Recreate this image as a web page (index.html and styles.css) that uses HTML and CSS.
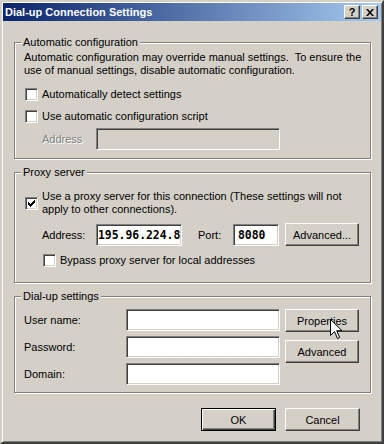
FILE: index.html
```html
<!DOCTYPE html>
<html lang="en">
<head>
  <meta charset="UTF-8">
  <title>Dial-up Connection Settings</title>
  <link rel="stylesheet" href="styles.css">
</head>
<body>
  <div class="window">
    <div class="titlebar">
      <span class="title">Dial-up Connection Settings</span>
      <span class="tb-btn tb-help">?</span>
      <span class="tb-btn tb-close">
        <svg width="8" height="7" viewBox="0 0 8 7"><path d="M0 0h2l2 2.5L6 0h2L5 3.5 8 7H6L4 4.5 2 7H0l3-3.5z" fill="#000"/></svg>
      </span>
    </div>

    <div class="content">
      <fieldset class="group">
        <legend>Automatic configuration</legend>
        <p class="note">Automatic configuration may override manual settings.&nbsp; To ensure the<br>use of manual settings, disable automatic configuration.</p>
        <div class="check-row"><span class="check"></span>Automatically detect settings</div>
        <div class="check-row"><span class="check"></span>Use automatic configuration script</div>
        <div class="field-row indent">
          <span class="lbl disabled">Address</span>
          <span class="edit wide disabled"></span>
        </div>
      </fieldset>

      <fieldset class="group proxy">
        <legend>Proxy server</legend>
        <div class="check-row multi">
          <span class="check checked">
            <svg width="7" height="7" viewBox="0 0 7 7"><path d="M0 2h1v1h1v1h1V3h1V2h1V1h1V0h1v3H6v1H5v1H4v1H3v1H2V6H1V5H0z" fill="#000"/></svg>
          </span>
          <span>Use a proxy server for this connection (These settings will not<br>apply to other connections).</span>
        </div>
        <div class="field-row indent">
          <span class="lbl">Address:</span>
          <span class="edit addr mono">195.96.224.8</span>
          <span class="lbl port">Port:</span>
          <span class="edit portnum mono">8080</span>
          <span class="btn adv">Advanced...</span>
        </div>
        <div class="check-row indent"><span class="check"></span>Bypass proxy server for local addresses</div>
      </fieldset>

      <fieldset class="group dialup">
        <legend>Dial-up settings</legend>
        <div class="dial-grid">
          <span class="lbl">User name:</span>
          <span class="edit"></span>
          <div class="side-buttons">
            <span class="btn">Properties
              <svg class="cursor" width="13" height="21" viewBox="0 0 13 21"><path d="M0.5 0.5v16l4-4 3 7 2.2-1-3-6.8h5.3z" fill="#fff" stroke="#000" stroke-width="1"/></svg>
            </span>
            <span class="btn">Advanced</span>
          </div>
          <span class="lbl">Password:</span>
          <span class="edit"></span>
          <span class="lbl">Domain:</span>
          <span class="edit"></span>
        </div>
      </fieldset>

      <div class="footer">
        <span class="btn default">OK</span>
        <span class="btn">Cancel</span>
      </div>
    </div>
  </div>
</body>
</html>
```

FILE: styles.css
```css
:root {
  --face: #d4d0c8;
  --shadow: #808080;
  --dark: #404040;
  --light: #ffffff;
}
body {
  margin: 0;
  background: var(--face);
  font-family: 'Liberation Sans', Arial, sans-serif;
  font-size: 11px;
  color: #000;
}
.window {
  width: 384px;
  height: 444px;
  box-sizing: border-box;
  border: 2px solid;
  border-color: var(--face) var(--dark) var(--dark) var(--face);
  box-shadow: inset 1px 1px 0 var(--light), inset -1px -1px 0 var(--shadow);
  padding: 1px;
  background: var(--face);
  white-space: nowrap;
}
.titlebar {
  height: 18px;
  display: flex;
  align-items: center;
  gap: 2px;
  padding: 0 3px 0 2px;
  background: linear-gradient(to right, #0a246a, #a6caf0);
}
.title {
  flex: 1;
  color: #fff;
  font-weight: bold;
  font-size: 11px;
}
.tb-btn {
  width: 16px;
  height: 14px;
  box-sizing: border-box;
  display: flex;
  align-items: center;
  justify-content: center;
  background: var(--face);
  border: 1px solid;
  border-color: var(--light) var(--dark) var(--dark) var(--light);
  box-shadow: inset -1px -1px 0 var(--shadow);
  font-weight: bold;
  font-size: 11px;
  line-height: 12px;
}
.content {
  padding: 15px 10px 0 11px;
}
.group {
  margin: 0 0 7px;
  padding: 1px 9px 8px;
  min-width: 0;
  border: 1px solid var(--shadow);
  box-shadow: 1px 1px 0 var(--light), inset 1px 1px 0 var(--light);
}
.group legend {
  margin-left: -3px;
  padding: 0 2px;
  line-height: 13px;
  background: var(--face);
}
.note {
  margin: 0 0 6px;
  padding-top: 1px;
  line-height: 13px;
}
.check-row {
  height: 22px;
  display: flex;
  align-items: center;
}
.check {
  width: 13px;
  height: 13px;
  box-sizing: border-box;
  margin: 0 4px 0 1px;
  flex-shrink: 0;
  display: flex;
  align-items: center;
  justify-content: center;
  background: #fff;
  border: 1px solid;
  border-color: var(--shadow) var(--light) var(--light) var(--shadow);
  box-shadow: inset 1px 1px 0 var(--dark), inset -1px -1px 0 var(--face);
}
.indent {
  padding-left: 18px;
}
.field-row {
  display: flex;
  align-items: center;
  height: 22px;
}
.group .field-row {
  margin-top: 1px;
}
.field-row .lbl {
  flex-shrink: 0;
  width: 54px;
}
.lbl.disabled {
  color: var(--shadow);
  text-shadow: 1px 1px 0 var(--light);
}
.edit {
  height: 22px;
  box-sizing: border-box;
  display: block;
  overflow: hidden;
  background: #fff;
  border: 1px solid;
  border-color: var(--shadow) var(--light) var(--light) var(--shadow);
  box-shadow: inset 1px 1px 0 var(--dark), inset -1px -1px 0 var(--face);
  padding: 0 2px;
  line-height: 20px;
}
.edit.wide {
  width: 184px;
}
.edit.disabled {
  background: var(--face);
}
.mono {
  font-family: 'DejaVu Sans Mono', 'Liberation Mono', monospace;
  font-weight: bold;
  font-size: 11.4px;
}
.btn {
  position: relative;
  height: 23px;
  box-sizing: border-box;
  display: flex;
  align-items: center;
  justify-content: center;
  background: var(--face);
  border: 1px solid;
  border-color: var(--light) var(--dark) var(--dark) var(--light);
  box-shadow: inset -1px -1px 0 var(--shadow);
}
.btn.default {
  border-color: #000;
  box-shadow: inset 1px 1px 0 var(--light), inset -1px -1px 0 var(--dark), inset -2px -2px 0 var(--shadow);
}

/* proxy group */
.proxy .check-row.multi {
  height: auto;
  margin-top: 10px;
  line-height: 13px;
}
.proxy .field-row {
  margin-top: 7px;
  height: 23px;
}
.edit.addr {
  width: 86px;
  padding: 0 0 0 1px;
}
.field-row .lbl.port {
  width: 35px;
  margin-left: 16px;
}
.edit.portnum {
  width: 46px;
  padding: 0 4px;
}
.btn.adv {
  width: 74px;
  margin-left: 6px;
}
.proxy .check-row.indent {
  margin-top: 3px;
}
.proxy {
  padding-bottom: 11px;
}

/* dial-up group */
.dialup {
  padding: 6px 10px 7px 9px;
}
.dial-grid {
  display: grid;
  grid-template-columns: 97px 154px 74px;
  grid-template-rows: 22px 22px 22px;
  column-gap: 5px;
  row-gap: 5px;
  align-items: center;
}
.side-buttons {
  grid-column: 3;
  grid-row: 1 / 4;
  align-self: start;
  display: flex;
  flex-direction: column;
  gap: 8px;
}
.cursor {
  position: absolute;
  left: 44px;
  top: 9px;
}

.footer {
  display: flex;
  justify-content: flex-end;
  gap: 9px;
  margin-top: 15px;
  padding-right: 11px;
}
.footer .btn {
  width: 75px;
}
```
